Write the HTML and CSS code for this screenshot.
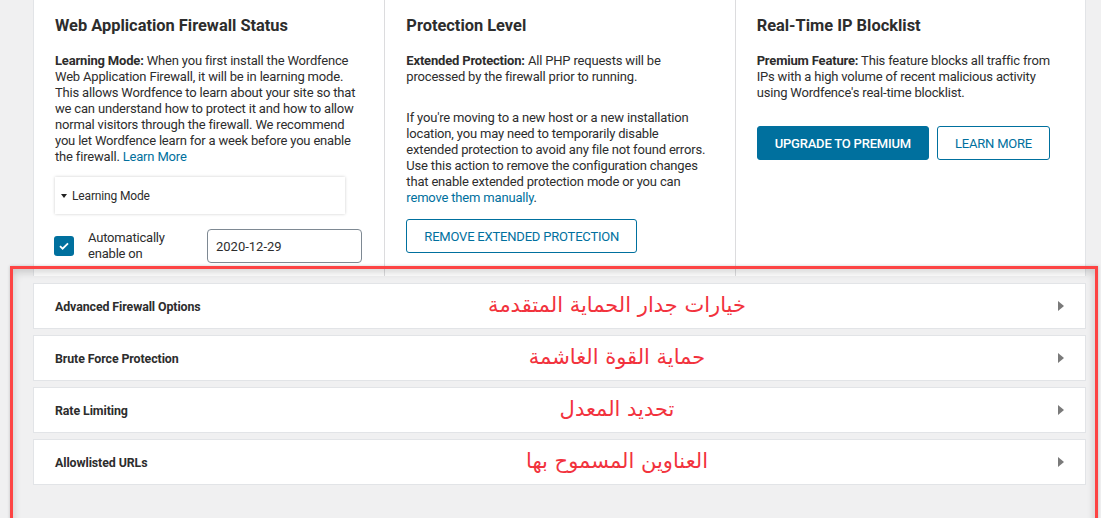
FILE: index.html
```html
<!DOCTYPE html>
<html>
  <head>
    <meta name="viewport" content="width=device-width, initial-scale=1.0">
<link rel="stylesheet" href="styles.css">
  </head>
  <body>
    <div id="wrapper">
      <div class="status">
        <div class="status__col">
          <h2>Web Application Firewall Status</h2>
          <p><b>Learning Mode:</b> When you first install the Wordfence Web Application Firewall, it will be in learning mode. This allows Wordfence to learn about your site so that we can understand how to protect it and how to allow normal visitors through the firewall. We recommend you let Wordfence learn for a week before you enable the firewall. <a href="#">Learn More</a></p>
          <div class="mode-select"><span class="caret"></span>Learning Mode</div>
          <div class="auto-enable">
            <span class="checkbox">
              <svg width="12" height="10" viewBox="0 0 12 10"><path d="M2 5.2l2.6 2.5L10 2.3" fill="none" stroke="#fff" stroke-width="1.8"/></svg>
            </span>
            <span class="auto-enable__label">Automatically enable on</span>
            <input class="date" type="text" value="2020-12-29">
          </div>
        </div>
        <div class="status__col">
          <h2>Protection Level</h2>
          <p><b>Extended Protection:</b> All PHP requests will be processed by the firewall prior to running.</p>
          <p class="spaced">If you're moving to a new host or a new installation location, you may need to temporarily disable extended protection to avoid any file not found errors. Use this action to remove the configuration changes that enable extended protection mode or you can <a href="#">remove them manually</a>.</p>
          <button class="btn">REMOVE EXTENDED PROTECTION</button>
        </div>
        <div class="status__col">
          <h2>Real-Time IP Blocklist</h2>
          <p><b>Premium Feature:</b> This feature blocks all traffic from IPs with a high volume of recent malicious activity using Wordfence's real-time blocklist.</p>
          <div class="btn-row">
            <button class="btn btn--primary">UPGRADE TO PREMIUM</button>
            <button class="btn">LEARN MORE</button>
          </div>
        </div>
      </div>

      <div class="options">
        <div class="option">
          <span class="option__title">Advanced Firewall Options</span>
          <span class="note" dir="rtl">خيارات جدار الحماية المتقدمة</span>
          <span class="arrow"></span>
        </div>
        <div class="option">
          <span class="option__title">Brute Force Protection</span>
          <span class="note" dir="rtl">حماية القوة الغاشمة</span>
          <span class="arrow"></span>
        </div>
        <div class="option">
          <span class="option__title">Rate Limiting</span>
          <span class="note" dir="rtl">تحديد المعدل</span>
          <span class="arrow"></span>
        </div>
        <div class="option">
          <span class="option__title">Allowlisted URLs</span>
          <span class="note" dir="rtl">العناوين المسموح بها</span>
          <span class="arrow"></span>
        </div>
      </div>
    </div>
    <div class="highlight"></div>
  </body>
</html>
```

FILE: styles.css
```css
* {
  box-sizing: border-box;
}
html, body {
  height: 100%;
}
body {
  margin: 0;
  background: #f0f0f1;
  font-family: Roboto, "Liberation Sans", Arial, sans-serif;
  color: #2d2d2d;
  overflow: hidden;
  position: relative;
}

#wrapper {
  width: 1053px;
  margin-left: 33px;
}

.status {
  display: grid;
  grid-template-columns: repeat(3, minmax(0, 1fr));
  background: #fff;
  border-left: 1px solid #e2e4e7;
  border-right: 1px solid #e2e4e7;
  height: 276px;
}
.status__col {
  padding: 16px 25px 0 21px;
}
.status__col + .status__col {
  border-left: 1px solid #dcdcde;
}
.status h2 {
  margin: 0 0 17px;
  font-size: 16.4px;
  font-weight: 700;
  line-height: 20px;
}
.status p {
  margin: 0;
  font-size: 13px;
  line-height: 16px;
  letter-spacing: -0.18px;
}
.status p.spaced {
  margin-top: 25px;
}
.status a {
  color: #00709e;
  text-decoration: none;
}

.mode-select {
  margin-top: 12px;
  width: 290px;
  height: 37px;
  background: #fff;
  box-shadow: 0 0 3px rgba(0,0,0,0.2);
  font-size: 12px;
  letter-spacing: -0.15px;
  display: flex;
  align-items: center;
  padding-left: 6px;
}
.caret {
  width: 0;
  height: 0;
  border-left: 3.5px solid transparent;
  border-right: 3.5px solid transparent;
  border-top: 4px solid #222;
  margin-right: 5px;
}

.auto-enable {
  display: flex;
  align-items: center;
  margin-top: 15px;
}
.checkbox {
  flex: none;
  width: 20px;
  height: 20px;
  border-radius: 3px;
  background: #00709e;
  display: flex;
  align-items: center;
  justify-content: center;
  margin-left: -1px;
}
.auto-enable__label {
  flex: none;
  font-size: 13px;
  line-height: 16px;
  letter-spacing: -0.2px;
  width: 90px;
  margin-left: 14px;
}
.date {
  flex: none;
  margin-left: 29px;
  width: 155px;
  height: 34px;
  border: 1px solid #7e8993;
  border-radius: 4px;
  font: 13px Roboto, "Liberation Sans", sans-serif;
  color: #2d2d2d;
  padding: 0 8px;
}

.btn {
  font: 13px Roboto, "Liberation Sans", sans-serif;
  letter-spacing: -0.2px;
  color: #00709e;
  background: #fff;
  border: 1px solid #00709e;
  border-radius: 3px;
  height: 34px;
  padding: 0 17px;
  margin-top: 13px;
}
.btn--primary {
  background: #00709e;
  color: #fff;
  font-weight: 500;
}
.btn-row {
  display: flex;
  gap: 8px;
  margin-top: 25px;
}
.btn-row .btn {
  margin-top: 0;
}

.options {
  display: flex;
  flex-direction: column;
  gap: 6px;
  margin-top: 7px;
}
.option {
  position: relative;
  height: 46px;
  background: #fff;
  border: 1px solid #e2e4e7;
  display: flex;
  align-items: center;
  justify-content: space-between;
  padding: 0 21px 0 21px;
}
.option__title {
  font-size: 12.4px;
  font-weight: 700;
  letter-spacing: -0.1px;
}
.arrow {
  width: 0;
  height: 0;
  border-top: 5px solid transparent;
  border-bottom: 5px solid transparent;
  border-left: 6px solid #7a7a7a;
}
.note {
  position: absolute;
  left: 583px;
  top: 50%;
  transform: translate(-50%, -54%);
  font-family: "DejaVu Sans", sans-serif;
  font-size: 21px;
  color: #f2323d;
  white-space: nowrap;
}

.highlight {
  position: absolute;
  left: 10px;
  top: 266px;
  width: 1088px;
  height: 300px;
  border: 3px solid #fd4444;
  box-shadow: 0 0 3px rgba(0,0,0,0.2), inset 0 3px 8px rgba(0,0,0,0.18);
}
```
